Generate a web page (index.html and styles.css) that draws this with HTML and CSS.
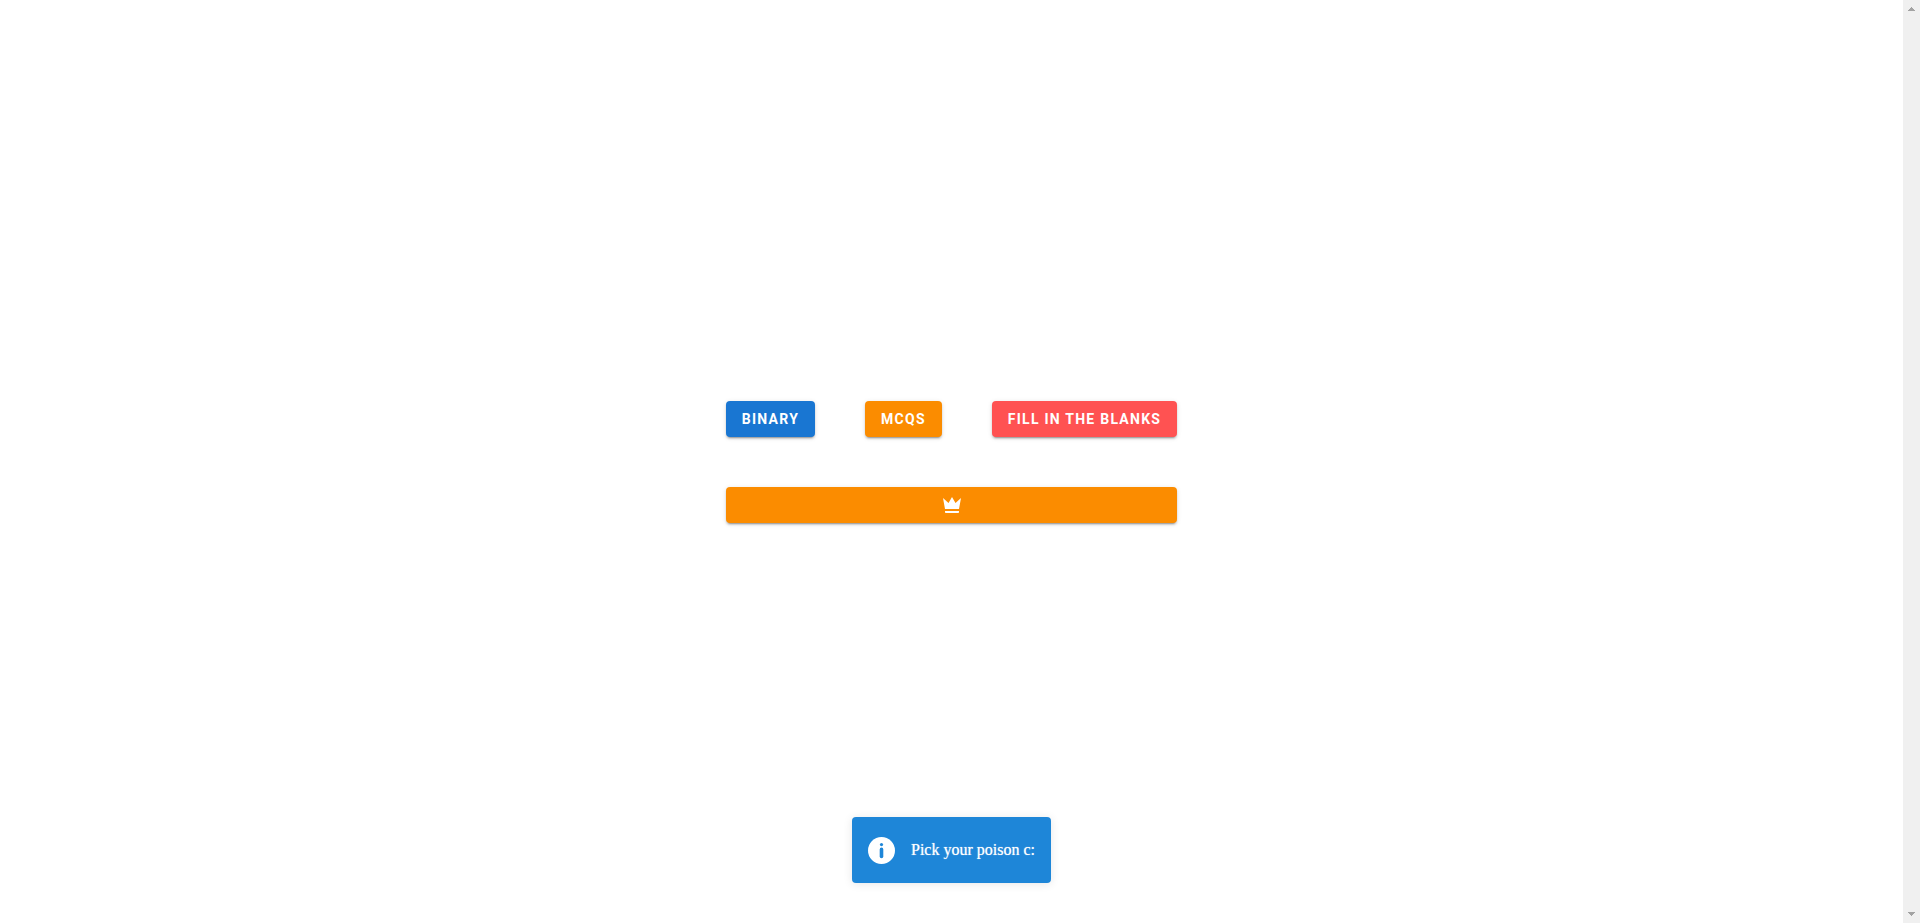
FILE: index.html
```
<!DOCTYPE html>
<html lang="en">
<head>
<meta charset="utf-8">
<title>Quiz</title>
<link rel="stylesheet" href="styles.css">
</head>
<body>
<main class="page">
  <div class="menu">
    <div class="modes">
      <button class="btn btn-primary" type="button">Binary</button>
      <button class="btn btn-warning" type="button">MCQs</button>
      <button class="btn btn-error" type="button">Fill in the blanks</button>
    </div>
    <button class="btn btn-warning" type="button" aria-label="Leaderboard">
      <svg class="crown" viewBox="0 0 24 24" aria-hidden="true"><path fill="currentColor" d="M5 16L3 5L8.500 10L12 4L15.500 10L21 5L19 16H5M19 19C19 19.600 18.600 20 18 20H6C5.400 20 5 19.600 5 19V18H19V19Z"/></svg>
    </button>
  </div>
  <div class="toasts">
    <div class="toast" role="status">
      <svg class="info" viewBox="0 0 27 27" aria-hidden="true"><circle cx="13.500" cy="13.500" r="13.500" fill="currentColor"/><circle class="mark" cx="13.500" cy="7.600" r="1.600"/><rect class="mark" x="11.700" y="10.600" width="3.600" height="10.600" rx="1.800"/></svg>
      <span>Pick your poison c:</span>
    </div>
  </div>
</main>
<div class="scrollbar" aria-hidden="true">
  <svg class="arrow" viewBox="0 0 17 17"><path d="M8 7h1v1h1v1h1v1h1v1H5v-1h1V9h1V8h1z"/></svg>
  <svg class="arrow" viewBox="0 0 17 17"><path d="M8 10h1V9h1V8h1V7h1V6H5v1h1v1h1v1h1z"/></svg>
</div>
</body>
</html>
```
FILE: styles.css
```
body {
  margin: 0;
  display: flex;
  min-height: 100vh;
  background: #fff;
}
.page {
  flex: 1;
  display: flex;
  align-items: center;
  justify-content: center;
  position: relative;
}
.menu {
  display: flex;
  flex-direction: column;
  gap: 50px;
}
.modes {
  display: flex;
  gap: 50px;
}
.btn {
  display: flex;
  align-items: center;
  justify-content: center;
  height: 36px;
  padding: 0 16px;
  border: 0;
  border-radius: 4px;
  color: #fff;
  font: 700 14px/20px Roboto, sans-serif;
  letter-spacing: 0.0892857143em;
  text-transform: uppercase;
  box-shadow: 0 3px 1px -2px rgba(0, 0, 0, .2), 0 2px 2px 0 rgba(0, 0, 0, .14), 0 1px 5px 0 rgba(0, 0, 0, .12);
  cursor: pointer;
}
.btn-primary { background: #1976d2; }
.btn-warning { background: #fb8c00; }
.btn-error { background: #ff5252; }
.crown {
  width: 24px;
  height: 24px;
}
.toasts {
  position: absolute;
  right: 0;
  bottom: 40px;
  left: 0;
  display: flex;
  justify-content: center;
  pointer-events: none;
}
.toast {
  display: flex;
  align-items: center;
  gap: 16px;
  height: 66px;
  box-sizing: border-box;
  padding: 0 16px;
  border-radius: 4px;
  background: #1e86d8;
  color: #fff;
  font: 16px/24px "Liberation Serif", serif;
  text-shadow: 0 0 1px rgba(255, 255, 255, .7);
  white-space: nowrap;
  box-shadow: 0 1px 10px 0 rgba(0, 0, 0, .1);
}
.info {
  width: 27px;
  height: 27px;
}
.mark { fill: #1e86d8; }
.scrollbar {
  display: flex;
  flex-direction: column;
  justify-content: space-between;
  width: 17px;
  background: #f0f0f0;
}
.arrow {
  width: 17px;
  height: 17px;
  fill: #a3a3a3;
}
```
